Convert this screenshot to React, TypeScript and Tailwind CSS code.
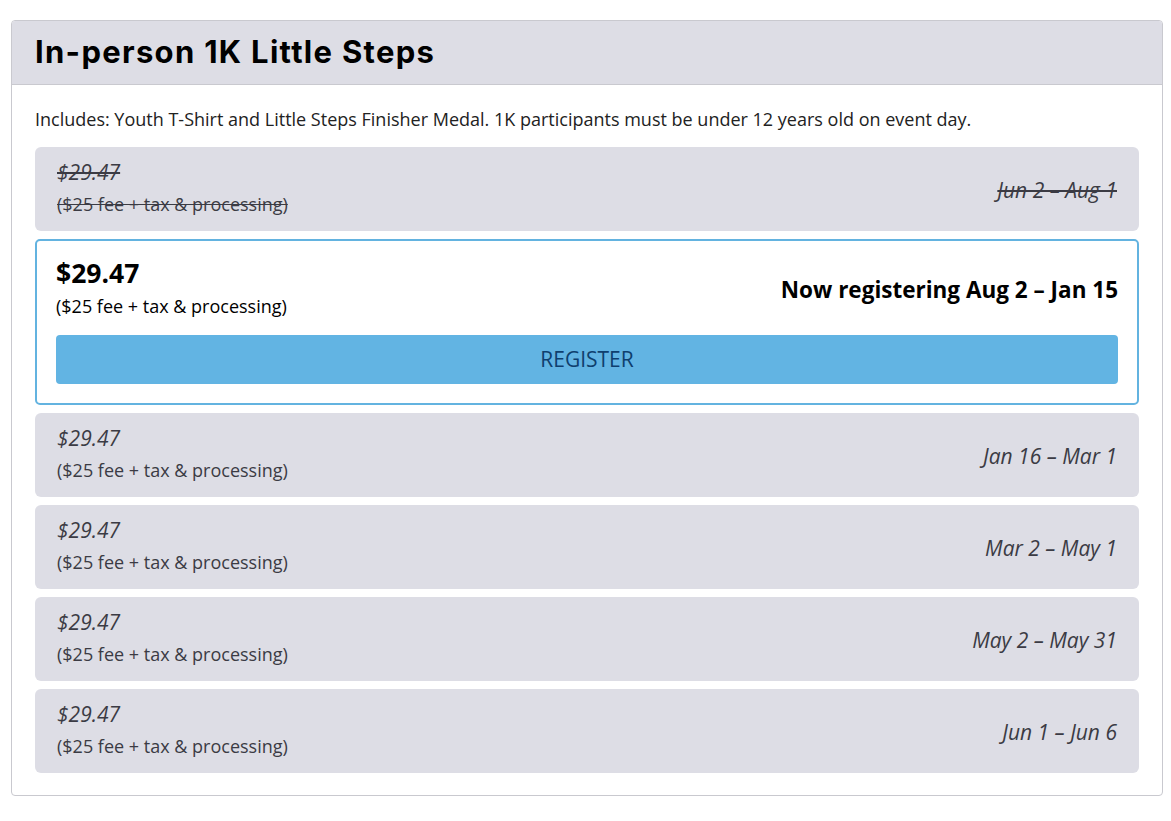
import React from "react";

const tiers = [
  { price: "$29.47", note: "($25 fee + tax & processing)", dates: "Jun 2 – Aug 1", state: "past" },
  { price: "$29.47", note: "($25 fee + tax & processing)", dates: "Aug 2 – Jan 15", state: "current" },
  { price: "$29.47", note: "($25 fee + tax & processing)", dates: "Jan 16 – Mar 1", state: "future" },
  { price: "$29.47", note: "($25 fee + tax & processing)", dates: "Mar 2 – May 1", state: "future" },
  { price: "$29.47", note: "($25 fee + tax & processing)", dates: "May 2 – May 31", state: "future" },
  { price: "$29.47", note: "($25 fee + tax & processing)", dates: "Jun 1 – Jun 6", state: "future" },
];

function PriceRow({ tier }: { tier: (typeof tiers)[number] }) {
  if (tier.state === "current") {
    return (
      <div className="rounded-[5px] border-2 border-[#63b3e0] bg-white px-[19px] pt-[15px] pb-[19px]">
        <div className="flex items-center justify-between">
          <div>
            <div className="text-[26.5px] font-bold leading-[34px] text-black">{tier.price}</div>
            <div className="mt-[4px] text-[18px] leading-[24px] text-black">{tier.note}</div>
          </div>
          <div className="pt-[5px] text-[22.5px] font-bold text-black">Now registering {tier.dates}</div>
        </div>
        <button className="mt-[17px] flex h-[49px] w-full items-center justify-center rounded-[4px] bg-[#62b4e3] text-[21px] text-[#0f3f6e]">
          REGISTER
        </button>
      </div>
    );
  }

  const past = tier.state === "past";
  return (
    <div className="flex h-[84px] items-center justify-between rounded-[6px] bg-[#dddde5] px-[22px] text-[#3b3b44]">
      <div className={`-mt-[4px] ${past ? "line-through" : ""}`}>
        <div className="text-[21px] italic leading-[28px]">{tier.price}</div>
        <div className="mt-[6px] text-[18px] leading-[24px]">{tier.note}</div>
      </div>
      <div className={`pt-[3px] text-[21px] italic ${past ? "line-through" : ""}`}>{tier.dates}</div>
    </div>
  );
}

export default function App() {
  return (
    <div className="min-h-screen bg-white pt-[20px] pl-[11px]" style={{ fontFamily: '"Open Sans", sans-serif' }}>
      <div className="w-[1152px] overflow-hidden rounded-[4px] border border-[#c9c9cf]">
        <div className="flex h-[64px] items-center border-b border-[#c9c9cf] bg-[#dddde5] px-[23px]">
          <h2
            className="text-[31px] font-bold tracking-[1.3px] text-black"
            style={{ fontFamily: "Inter, sans-serif" }}
          >
            In-person 1K Little Steps
          </h2>
        </div>
        <div className="px-[23px] pt-[21px] pb-[22px]">
          <p className="text-[18px] leading-[26px] text-[#222]">
            Includes: Youth T-Shirt and Little Steps Finisher Medal. 1K participants must be under 12 years old on event day.
          </p>
          <div className="mt-[15px] flex flex-col gap-[8px]">
            {tiers.map((tier, i) => (
              <PriceRow key={i} tier={tier} />
            ))}
          </div>
        </div>
      </div>
    </div>
  );
}
